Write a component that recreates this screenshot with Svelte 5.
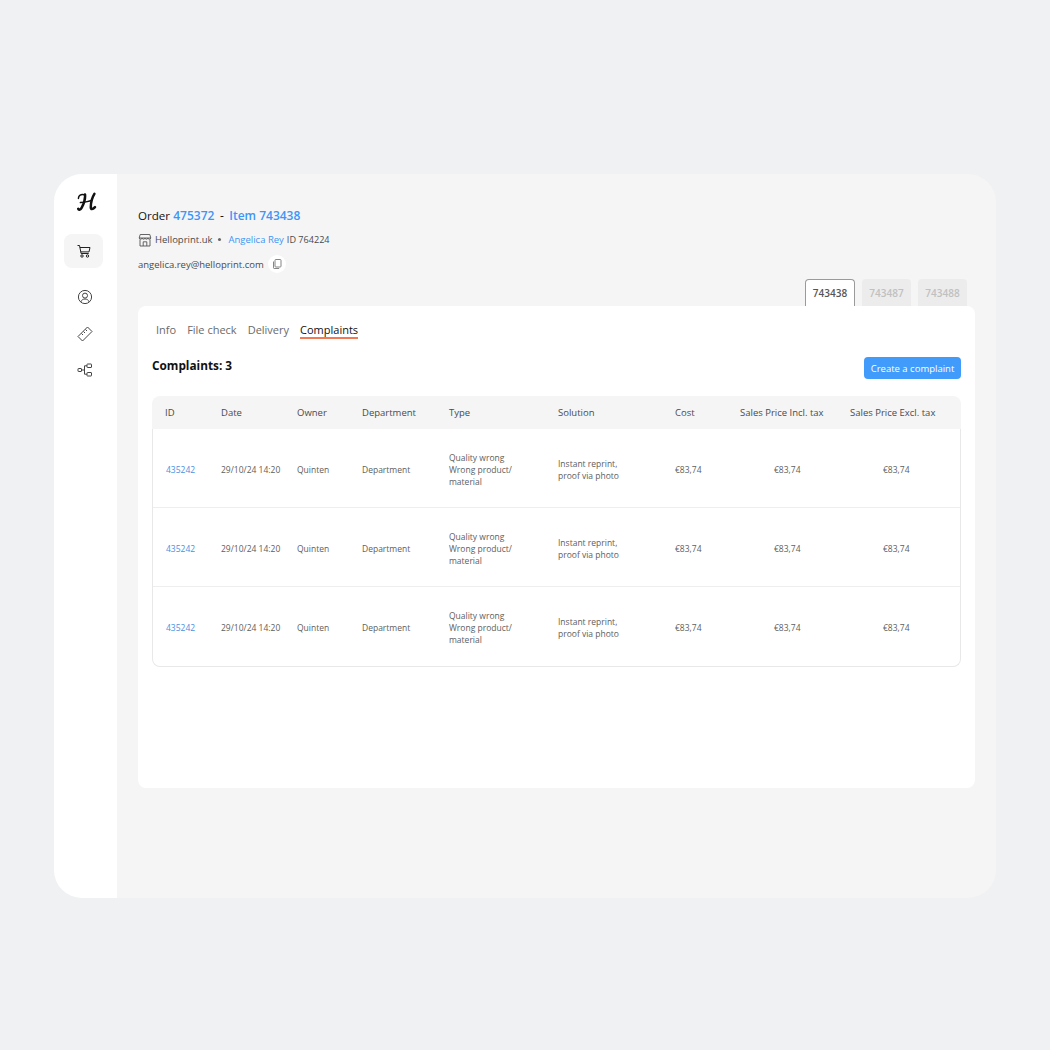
<script lang="ts">
	const rows = [1, 2, 3];
	const columns = ['ID', 'Date', 'Owner', 'Department', 'Type', 'Solution', 'Cost', 'Sales Price Incl. tax', 'Sales Price Excl. tax'];
</script>

<div class="page">
	<div class="frame">
		<aside class="sidebar">
			<svg class="logo" viewBox="0 0 20 20" width="20" height="20" fill="none" stroke="#111" stroke-linecap="round">
				<path d="M1.400 6.400C1.600 3.400 4 2 7 2.800" stroke-width="1.500" />
				<path d="M8 2.400C8.400 6 6.800 12 4.600 15.800 3.600 17.600 1.800 18.400 1.200 16.800" stroke-width="2.500" />
				<path d="M3.400 10.600C7 10.200 11 9.800 14.600 8.400" stroke-width="1.500" />
				<path d="M17.400 1.800C15.400 5 13.800 11 13.800 15.200 13.800 17.600 15.600 17.800 18 15.200" stroke-width="2.500" />
			</svg>
			<div class="nav-active">
				<svg viewBox="0 0 16 16" width="16" height="16" fill="none" stroke="#222" stroke-width="1">
					<path d="M1.500 2.500h2l1.600 8h7.600" />
					<path d="M3.900 4.500H14l-1 4.400H4.800" />
					<circle cx="6" cy="13" r="1.200" />
					<circle cx="11.500" cy="13" r="1.200" />
				</svg>
			</div>
			<svg class="nav-icon" viewBox="0 0 16 16" width="16" height="16" fill="none" stroke="#444" stroke-width="1">
				<circle cx="8" cy="8" r="6.600" />
				<circle cx="8" cy="6.600" r="2.500" />
				<path d="M3.700 13c.8-2 2.400-3 4.300-3s3.500 1 4.300 3" />
			</svg>
			<svg class="nav-icon" viewBox="0 0 16 16" width="16" height="16" fill="none" stroke="#444" stroke-width="1">
				<path d="M1 10.500 10.500 1l4.500 4.500L5.500 15z" />
				<path d="M4.500 7.500l1.500 1.500M6.500 5.500l1.500 1.500M8.500 3.500l1.500 1.500" />
			</svg>
			<svg class="nav-icon share" viewBox="0 0 16 16" width="16" height="16" fill="none" stroke="#444" stroke-width="1">
				<rect x="1" y="6.500" width="3.500" height="3" rx=".5" />
				<rect x="10" y="2" width="4.500" height="3.500" rx=".5" />
				<rect x="10" y="10.500" width="4.500" height="3.500" rx=".5" />
				<path d="M4.500 8H7.500M10 3.800H7.500v8.400H10" />
			</svg>
		</aside>

		<main class="main">
			<header class="order">
				<h1><span class="order-label">Order</span> <a href="#order">475372</a><span class="dash">-</span><a href="#item">Item 743438</a></h1>
				<div class="meta">
					<svg viewBox="0 0 14 14" width="14" height="14" fill="none" stroke="#555" stroke-width=".9">
						<path d="M2.200 1.500h9.600l1 3.500H1.200z" />
						<path d="M1.200 5c0 1.600 2.900 1.600 2.900 0 0 1.600 2.900 1.600 2.900 0 0 1.600 2.900 1.600 2.900 0 0 1.600 2.900 1.600 2.900 0" />
						<path d="M2 6.500v6.500h10V6.500" />
						<path d="M5.200 13V8.800h3.600V13" />
					</svg>
					<span>Helloprint.uk</span>
					<span class="bullet"></span>
					<a href="#customer">Angelica Rey</a>
					<span class="customer-id">ID 764224</span>
				</div>
				<div class="email">
					<span>angelica.rey@helloprint.com</span>
					<span class="copy">
						<svg viewBox="0 0 12 12" width="12" height="12" fill="none" stroke="#777" stroke-width=".9">
							<rect x="4" y="1.500" width="6" height="7.500" rx=".8" />
							<path d="M2.500 3.500v6.300c0 .4.300.7.700.7h5" />
						</svg>
					</span>
				</div>
			</header>

			<div class="item-tabs">
				<button class="item-tab active">743438</button>
				<button class="item-tab">743487</button>
				<button class="item-tab">743488</button>
			</div>

			<section class="card">
				<nav class="tabs">
					<span>Info</span>
					<span>File check</span>
					<span>Delivery</span>
					<span class="current">Complaints</span>
				</nav>

				<div class="heading">
					<h2>Complaints: 3</h2>
					<button class="create">Create a complaint</button>
				</div>

				<div class="table">
					<div class="row head">
						{#each columns as col}
							<div>{col}</div>
						{/each}
					</div>
					<div class="rows">
						{#each rows as row (row)}
							<div class="row body">
								<div><a href="#complaint">435242</a></div>
								<div>29/10/24 14:20</div>
								<div>Quinten</div>
								<div>Department</div>
								<div>Quality wrong<br />Wrong product/<br />material</div>
								<div>Instant reprint,<br />proof via photo</div>
								<div>€83,74</div>
								<div class="price">€83,74</div>
								<div class="price last">€83,74</div>
							</div>
						{/each}
					</div>
				</div>
			</section>
		</main>
	</div>
</div>

<style>
	:global(body) {
		background: #f0f1f3;
		font-family: 'Open Sans', sans-serif;
	}
	a {
		text-decoration: none;
	}
	.page {
		width: 1050px;
		height: 1050px;
		padding: 174px 54px 152px;
		box-sizing: border-box;
	}
	.frame {
		display: flex;
		height: 724px;
		border-radius: 28px;
		overflow: hidden;
		background: #f5f5f5;
	}
	.sidebar {
		width: 63px;
		flex-shrink: 0;
		background: #fff;
		display: flex;
		flex-direction: column;
		align-items: center;
		padding-top: 18px;
		padding-right: 1px;
		box-sizing: border-box;
	}
	.logo {
		margin-left: 3px;
	}
	.nav-active {
		width: 39px;
		height: 34px;
		margin-top: 22px;
		margin-right: 3px;
		border-radius: 8px;
		background: #f5f5f5;
		display: flex;
		align-items: center;
		justify-content: center;
	}
	.nav-icon {
		margin-top: 21px;
	}
	.nav-icon.share {
		margin-top: 20px;
	}
	.main {
		flex: 1;
		padding: 33px 21px 0;
		box-sizing: border-box;
	}
	h1 {
		margin: 0;
		font-size: 12px;
		line-height: 17px;
		font-weight: 400;
		color: #111;
	}
	h1 a {
		color: #3d96f5;
		font-weight: 600;
	}
	.order-label {
		font-size: 11.600px;
	}
	.dash {
		margin: 0 5.500px;
	}
	.meta {
		display: flex;
		align-items: center;
		margin-top: 9px;
		font-size: 9.500px;
		line-height: 14px;
		color: #4a4a4a;
		font-weight: 500;
	}
	.meta svg {
		margin-right: 3px;
	}
	.meta a {
		color: #3d96f5;
	}
	.customer-id {
		margin-left: 3px;
		font-size: 9.100px;
	}
	.bullet {
		width: 3px;
		height: 3px;
		border-radius: 50%;
		background: #666;
		margin: 0 7px 2px 6px;
	}
	.email {
		display: flex;
		align-items: center;
		gap: 4px;
		margin-top: 9px;
		font-size: 9.500px;
		line-height: 18px;
		color: #4a4a4a;
		font-weight: 500;
	}
	.copy {
		width: 18px;
		height: 18px;
		margin-top: -2px;
		border-radius: 50%;
		background: #fff;
		display: flex;
		align-items: center;
		justify-content: center;
	}
	.item-tabs {
		display: flex;
		justify-content: flex-end;
		gap: 7px;
		margin-top: 5px;
		padding-right: 8px;
	}
	.item-tab {
		width: 49px;
		height: 27px;
		padding: 0;
		border: 0;
		border-radius: 4px 4px 0 0;
		background: #ececec;
		font-family: inherit;
		font-size: 10px;
		font-weight: 600;
		color: #c0c0c0;
	}
	.item-tab.active {
		width: 50px;
		background: #fff;
		border: 1px solid #9a9a9a;
		border-bottom: 0;
		color: #555;
	}
	.card {
		height: 482px;
		padding: 15px 14px 0;
		box-sizing: border-box;
		background: #fff;
		border-radius: 8px;
	}
	.tabs {
		display: flex;
		gap: 11px;
		padding-left: 4px;
		font-size: 11px;
		line-height: 17px;
		font-weight: 500;
		color: #6a6a6a;
	}
	.tabs .current {
		color: #111;
		border-bottom: 2px solid #f07a55;
		height: 16px;
	}
	.heading {
		display: flex;
		justify-content: space-between;
		align-items: flex-start;
		margin-top: 18px;
	}
	h2 {
		margin: 0;
		font-size: 11.800px;
		line-height: 17px;
		font-weight: 700;
		color: #111;
	}
	.create {
		height: 22px;
		width: 97px;
		padding: 0;
		border: 0;
		border-radius: 4px;
		background: #419bfa;
		color: #fff;
		font-family: inherit;
		font-size: 9.500px;
		font-weight: 500;
	}
	.table {
		margin-top: 17px;
	}
	.rows {
		border: 1px solid #e8e8e8;
		border-top: 0;
		border-radius: 0 0 8px 8px;
	}
	.row {
		display: grid;
		align-items: center;
		font-size: 8.500px;
		line-height: 12px;
		color: #606060;
	}
	.row > div {
		padding-left: 13px;
	}
	.head {
		grid-template-columns: 56px 76px 65px 87px 109px 117px 65px 110px 1fr;
		height: 33px;
		padding-top: 1px;
		box-sizing: border-box;
		border-radius: 8px 8px 0 0;
		background: #f5f5f5;
		font-size: 9.500px;
		font-weight: 500;
		color: #4a4a4a;
	}
	.body {
		grid-template-columns: 55px 76px 65px 87px 109px 117px 65px 110px 1fr;
		height: 79px;
		padding-top: 3px;
		box-sizing: border-box;
		border-bottom: 1px solid #eeeeee;
	}
	.body:last-child {
		border-bottom: 0;
	}
	.body a {
		color: #4a90e2;
	}
	.body .price {
		padding-left: 47px;
	}
	.body .price.last {
		padding-left: 46px;
	}
</style>
